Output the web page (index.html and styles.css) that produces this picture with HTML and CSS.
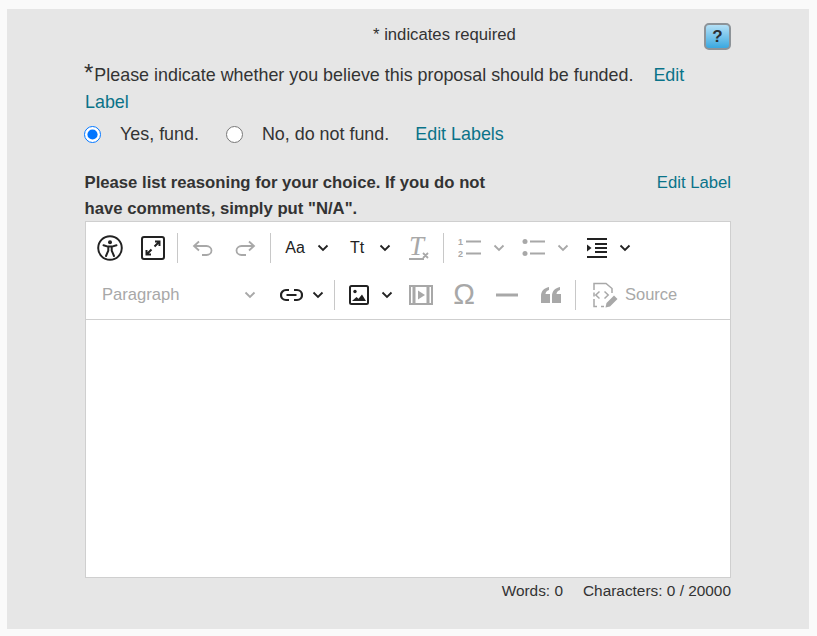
FILE: index.html
```html
<!DOCTYPE html>
<html lang="en">
<head>
    <meta charset="UTF-8">
    <title>Proposal review</title>
    <link rel="stylesheet" href="styles.css">
</head>
<body>
    <div class="panel">
        <div class="top-row">
            <span class="required-note">* indicates required</span>
            <span class="help-btn">?</span>
        </div>

        <p class="question"><span class="star">*</span>Please indicate whether you believe this proposal should be funded.<a class="edit-link question-edit" href="#">Edit Label</a></p>

        <div class="radio-row">
            <input class="radio first-radio" type="radio" name="fund" checked>
            <label class="radio-label yes-label">Yes, fund.</label>
            <input class="radio" type="radio" name="fund">
            <label class="radio-label no-label">No, do not fund.</label>
            <a class="edit-link" href="#">Edit Labels</a>
        </div>

        <div class="comment-head">
            <span class="comment-label">Please list reasoning for your choice. If you do not have comments, simply put "N/A".</span>
            <a class="edit-link small-edit" href="#">Edit Label</a>
        </div>

        <div class="editor">
            <div class="toolbar">
                <div class="tb-row">
                    <span class="btn dark">
                        <svg width="26" height="26" viewBox="0 0 26 26" fill="none" stroke="currentColor" stroke-width="2"><circle cx="13" cy="13" r="11.8"/><circle cx="13" cy="7.2" r="2" fill="currentColor" stroke="none"/><path d="M6.5 10.200 11 11.600h4l4.500-1.400M11.300 11.600v4L9 21M14.700 11.600v4L17 21" stroke-linecap="round" stroke-linejoin="round"/></svg>
                    </span>
                    <span class="btn dark">
                        <svg width="24" height="24" viewBox="0 0 24 24" fill="none" stroke="currentColor" stroke-width="2"><rect x="1" y="1" width="22" height="22" rx="2"/><path d="M13.500 10.500 18 6M14 5.500h4.500V10M10.500 13.500 6 18M5.500 14v4.500H10"/></svg>
                    </span>
                    <span class="sep"></span>
                    <span class="btn off">
                        <svg width="22" height="16" viewBox="0 0 22 16" fill="none" stroke="currentColor" stroke-width="1.800"><path d="M7 1.500 2 6l5 4.500M2.500 6h12a5 4.500 0 0 1 0 9H10"/></svg>
                    </span>
                    <span class="btn off">
                        <svg width="22" height="16" viewBox="0 0 22 16" fill="none" stroke="currentColor" stroke-width="1.800"><path d="M14 1.500 19 6l-5 4.500M18.500 6h-12a5 4.500 0 0 0 0 9H11"/></svg>
                    </span>
                    <span class="sep"></span>
                    <span class="btn dark after-sep"><span class="glyph">Aa</span></span>
                    <svg class="chev dark" viewBox="0 0 12 8"><path d="M1.500 1.500 6 6l4.500-4.500"/></svg>
                    <span class="btn dark next-drop"><span class="glyph">Tt</span></span>
                    <svg class="chev dark" viewBox="0 0 12 8"><path d="M1.500 1.500 6 6l4.500-4.500"/></svg>
                    <span class="btn off next-drop">
                        <svg class="clear-icon" width="22" height="26" viewBox="0 0 22 26"><text class="clear-t" x="1" y="20">T</text><path d="M1 24h15M15 18l5 5M20 18l-5 5" fill="none" stroke="currentColor" stroke-width="1.800"/></svg>
                    </span>
                    <span class="sep"></span>
                    <span class="btn off">
                        <svg width="23" height="22" viewBox="0 0 23 22"><text class="list-num" x="0" y="8">1</text><text class="list-num" x="0" y="20">2</text><path d="M8 4.500h15M8 16.500h15" stroke="currentColor" stroke-width="2"/></svg>
                    </span>
                    <svg class="chev off wide" viewBox="0 0 12 8"><path d="M1.500 1.500 6 6l4.500-4.500"/></svg>
                    <span class="btn off next-drop">
                        <svg width="23" height="22" viewBox="0 0 23 22"><circle cx="3" cy="4.500" r="2.500" fill="currentColor"/><circle cx="3" cy="16.500" r="2.500" fill="currentColor"/><path d="M8 4.500h15M8 16.500h15" stroke="currentColor" stroke-width="2"/></svg>
                    </span>
                    <svg class="chev off wide" viewBox="0 0 12 8"><path d="M1.500 1.500 6 6l4.500-4.500"/></svg>
                    <span class="btn dark next-drop">
                        <svg width="20" height="20" viewBox="0 0 20 20"><path d="M0 1h20M8 6h12M8 10h12M8 14h12M0 19h20" stroke="currentColor" stroke-width="2"/><path d="M0 6.500 4.500 10 0 13.500z" fill="currentColor"/></svg>
                    </span>
                    <svg class="chev dark" viewBox="0 0 12 8"><path d="M1.500 1.500 6 6l4.500-4.500"/></svg>
                </div>
                <div class="tb-row">
                    <span class="para-select">
                        <span>Paragraph</span>
                        <svg class="chev off" viewBox="0 0 12 8"><path d="M1.500 1.500 6 6l4.500-4.500"/></svg>
                    </span>
                    <span class="btn dark">
                        <svg width="23" height="14" viewBox="0 0 23 14" fill="none" stroke="currentColor" stroke-width="2.200"><path d="M9 2H6a5 5 0 0 0 0 10h3M14 2h3a5 5 0 0 1 0 10h-3M6.500 7h10"/></svg>
                    </span>
                    <svg class="chev dark tight" viewBox="0 0 12 8"><path d="M1.500 1.500 6 6l4.500-4.500"/></svg>
                    <span class="sep sep-link"></span>
                    <span class="btn dark after-image">
                        <svg width="20" height="20" viewBox="0 0 20 20" fill="none" stroke="currentColor" stroke-width="2"><rect x="1" y="1" width="18" height="18" rx="1.500"/><circle cx="6" cy="6.500" r="1.700" fill="currentColor" stroke="none"/><path d="M3 16l4.500-4 2 1.800L13 9.500l4 6.500z" fill="currentColor" stroke="none"/></svg>
                    </span>
                    <svg class="chev dark" viewBox="0 0 12 8"><path d="M1.500 1.500 6 6l4.500-4.500"/></svg>
                    <span class="btn off media-btn">
                        <svg width="24" height="20" viewBox="0 0 24 20"><rect x="1" y="1" width="22" height="18" fill="none" stroke="currentColor" stroke-width="2"/><path d="M5 1v18M19 1v18" stroke="currentColor" stroke-width="3"/><path d="M9 5.500v9l7-4.500z" fill="currentColor"/></svg>
                    </span>
                    <span class="btn off omega">&#937;</span>
                    <span class="btn off">
                        <svg width="22" height="4" viewBox="0 0 22 4"><path d="M0 2h22" stroke="currentColor" stroke-width="3"/></svg>
                    </span>
                    <span class="btn off quote-btn">
                        <svg width="20" height="16" viewBox="0 0 20 16" fill="currentColor"><path d="M0 16V9C0 4 3 1 8 0v3C5.500 4 4.500 5.500 4.500 7H9v9zM11 16V9c0-5 3-8 8-9v3c-2.500 1-3.500 2.500-3.500 4H20v9z"/></svg>
                    </span>
                    <span class="sep sep-quote"></span>
                    <span class="source off">
                        <svg width="26" height="26" viewBox="0 0 26 26" fill="none" stroke="currentColor" stroke-width="1.500"><path d="M2 8V1.500h12l6 5V11M2 17v7.500h3M9 24.500h3M2 10.500v4M7.500 9.500 3.800 13l3.700 3.500M12.500 9.500l3.700 3.500-3.700 3.500"/><path d="M13.500 25.500l1-4.500L22 13.500l3.500 3.500-7.500 7.500z" fill="currentColor" stroke="none"/></svg>
                        <span>Source</span>
                    </span>
                </div>
            </div>
            <div class="edit-area"></div>
        </div>

        <div class="counter">
            <span>Words: 0</span>
            <span>Characters: 0 / 20000</span>
        </div>
    </div>
</body>
</html>
```

FILE: styles.css
```css
html, body { margin: 0; padding: 0; }
body { font-family: "Liberation Sans", Arial, sans-serif; background: #fafafa; color: #333; padding: 9px 8px 7px 7px; }

.panel { background: #e6e6e6; height: 620px; padding: 0 78px; box-sizing: border-box; }

.top-row { display: flex; justify-content: space-between; align-items: center; padding: 14px 0 0 288px; height: 27px; box-sizing: content-box; }
.required-note { font-size: 16.700px; position: relative; top: -2px; }
.help-btn { width: 27px; height: 27px; box-sizing: border-box; border: 2px solid #8d9398; border-radius: 5px; background: linear-gradient(#b4e0f6, #3aa8e0); color: #2b2f33; font-weight: bold; font-size: 17px; text-align: center; line-height: 23px; }

.question { margin: 12px 0 0; padding-right: 40px; font-size: 17.900px; line-height: 27px; }
.star { font-size: 24px; line-height: 20px; margin-left: -1px; margin-right: 1px; }
.edit-link { color: #0a7389; text-decoration: none; }
.question-edit { margin-left: 20px; }

.radio-row { display: flex; align-items: center; margin-top: 5px; height: 27px; font-size: 17.900px; }
.radio { width: 17px; height: 17px; margin: 0; }
.first-radio { margin-left: -1px; }
.radio-label { margin: 0; }
.yes-label { margin-left: 19px; margin-right: 27px; }
.no-label { margin-left: 19px; margin-right: 26px; }

.comment-head { display: flex; justify-content: space-between; margin-top: 22px; margin-bottom: -1px; font-size: 16.700px; line-height: 26px; }
.comment-label { width: 430px; font-weight: bold; margin-left: -0.500px; }

.editor { border: 1px solid #cfcfcf; background: #fff; box-sizing: border-box; height: 357px; display: flex; flex-direction: column; }
.toolbar { border-bottom: 1px solid #cfcfcf; padding: 2px 0 0 3px; height: 98px; box-sizing: border-box; }
.tb-row { display: flex; align-items: center; height: 47px; }

.btn { width: 42px; height: 40px; flex: none; display: flex; align-items: center; justify-content: center; margin-right: 1px; }
.dark { color: #222; }
.off { color: #a8a8a8; }
.sep { width: 1px; height: 30px; background: #c8c8c8; margin: 0 4px 0 2px; flex: none; }
.sep-link { margin-left: 10px; margin-right: 2px; }
.sep-quote { margin-left: 2px; }
.after-sep { margin-left: -1px; }
.after-image { margin-left: 1px; }
.media-btn { margin-left: 7px; }
.quote-btn { margin-left: 1px; }
.next-drop { margin-left: 7px; }

.glyph { font-size: 16px; }
.chev { width: 12px; height: 8px; flex: none; fill: none; stroke: currentColor; stroke-width: 1.800; }
.chev.wide { margin-left: 2px; }
.chev.tight { margin-left: -1px; }

.clear-icon { overflow: visible; }
.clear-t { font-family: "Liberation Serif", serif; font-style: italic; font-size: 27px; fill: currentColor; }
.list-num { font-family: "Liberation Sans", sans-serif; font-size: 9px; font-weight: bold; fill: currentColor; }

.para-select { width: 170px; flex: none; display: flex; justify-content: space-between; align-items: center; padding: 0 3px 0 13px; box-sizing: border-box; margin-right: 11px; font-size: 16.600px; color: #a8a8a8; }
.omega { font-size: 29px; }
.source { display: flex; align-items: center; gap: 7px; margin-left: 12px; font-size: 16.500px; }

.edit-area { flex: 1; }

.counter { display: flex; justify-content: flex-end; gap: 20px; margin-top: 4px; font-size: 15.400px; line-height: 18px; }
```
